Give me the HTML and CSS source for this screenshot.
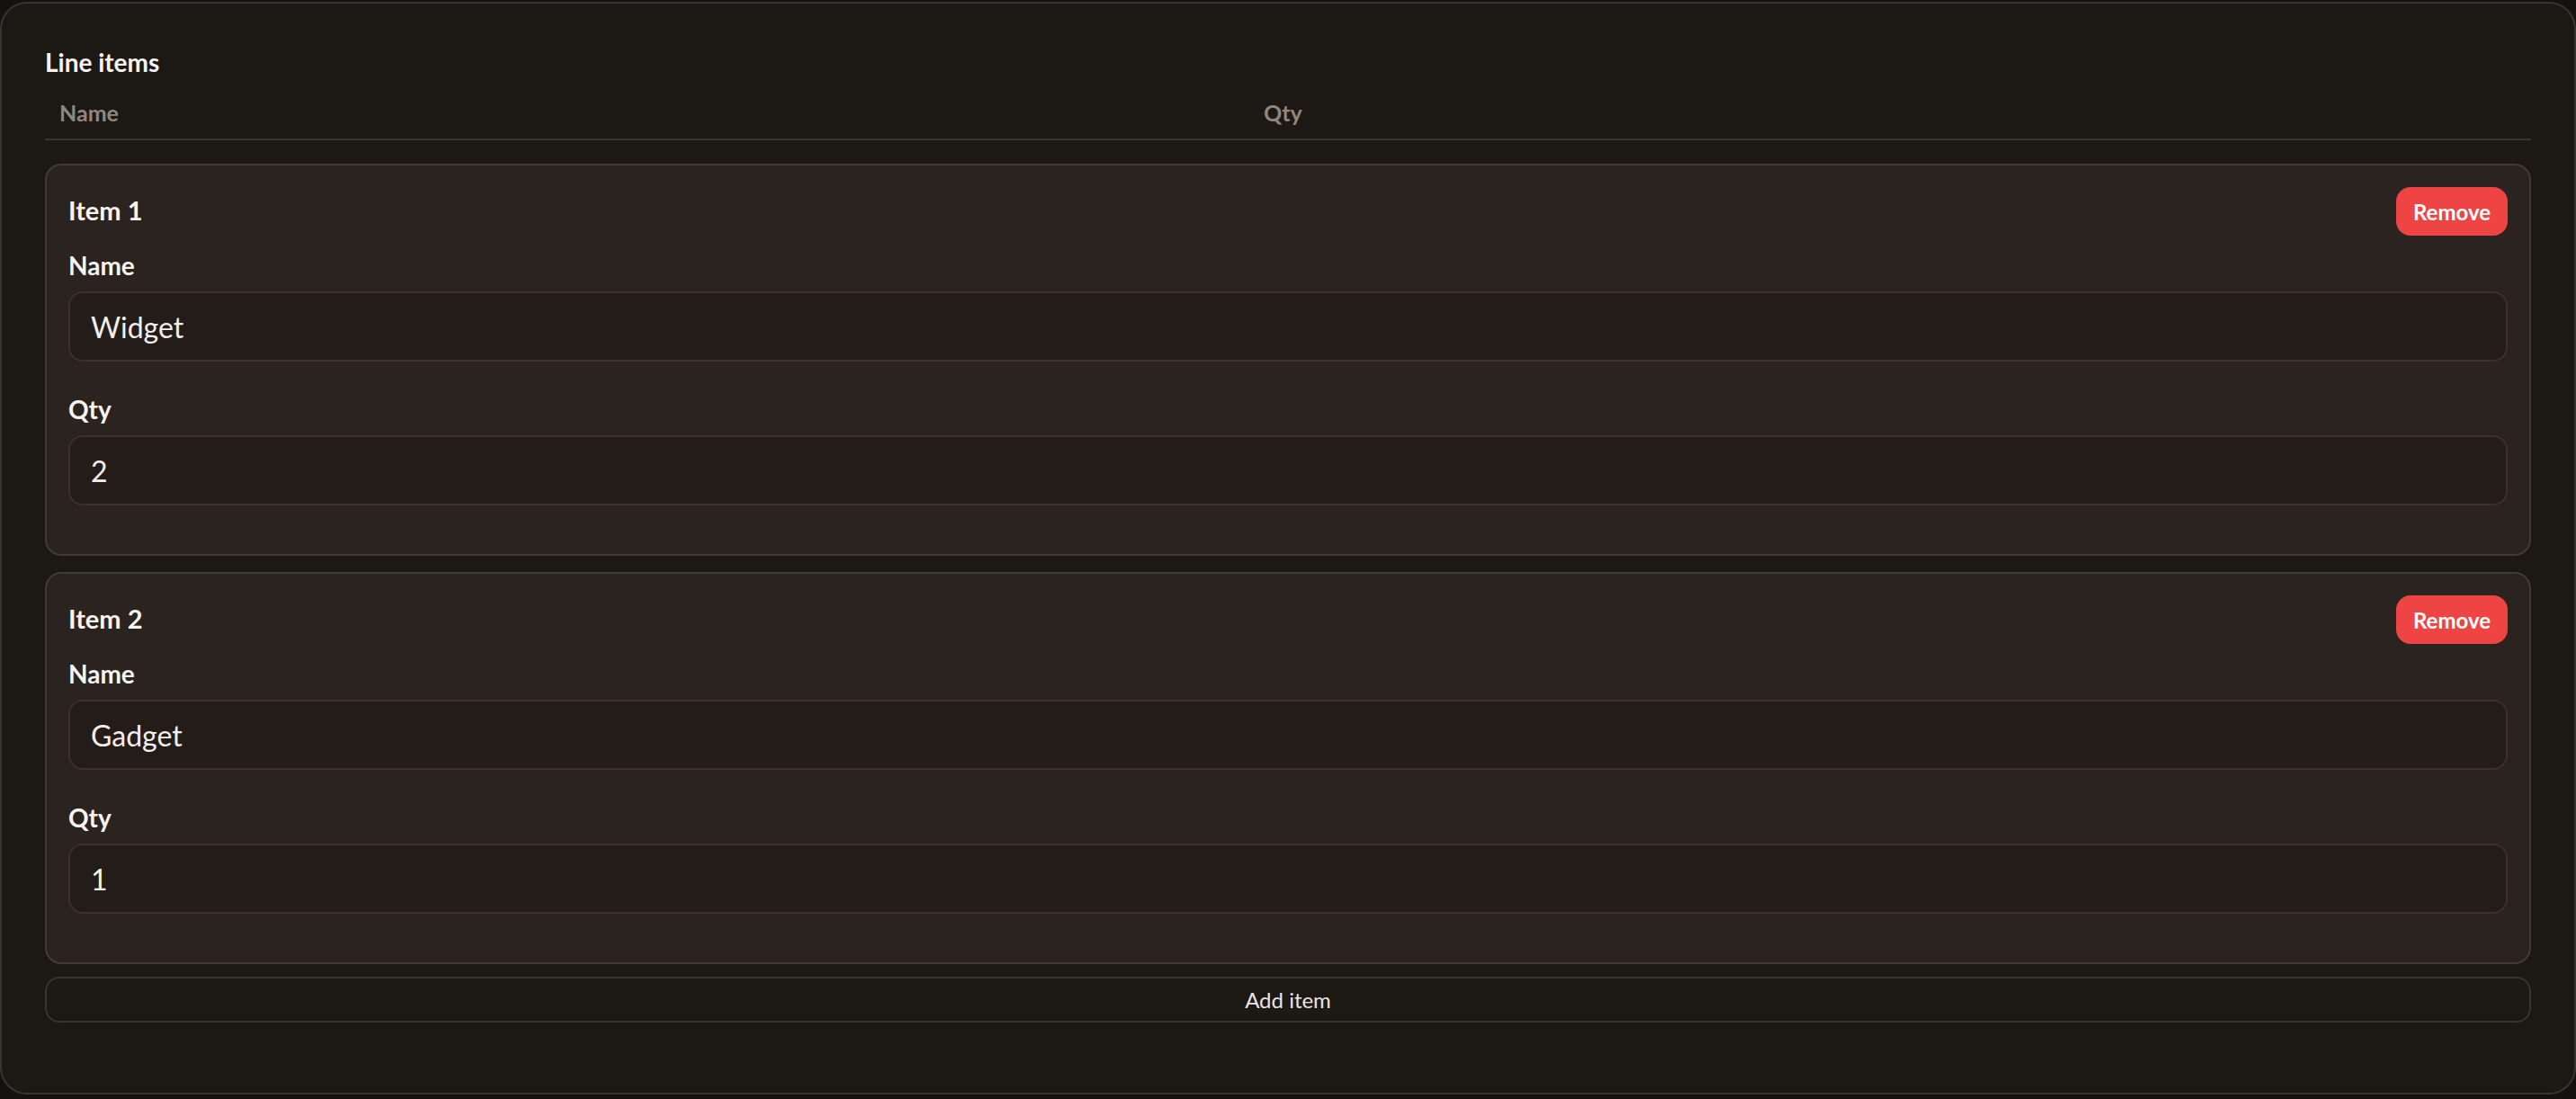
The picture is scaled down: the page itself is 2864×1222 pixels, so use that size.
FILE: index.html
```html
<!DOCTYPE html>
<html lang="en">
<head>
<meta charset="utf-8">
<title>Line items</title>
<link rel="stylesheet" href="styles.css">
</head>
<body>
<main class="panel">
  <h2 class="panel-title">Line items</h2>
  <div class="table-head">
    <div class="th">Name</div>
    <div class="th">Qty</div>
  </div>
  <div class="items">
    <section class="item-card">
      <div class="item-head">
        <h3 class="item-title">Item 1</h3>
        <button class="btn-remove" type="button">Remove</button>
      </div>
      <div class="fields">
        <label class="field">
          <span class="field-label">Name</span>
          <input class="field-input" type="text" value="Widget">
        </label>
        <label class="field">
          <span class="field-label">Qty</span>
          <input class="field-input" type="text" value="2">
        </label>
      </div>
    </section>
    <section class="item-card">
      <div class="item-head">
        <h3 class="item-title">Item 2</h3>
        <button class="btn-remove" type="button">Remove</button>
      </div>
      <div class="fields">
        <label class="field">
          <span class="field-label">Name</span>
          <input class="field-input" type="text" value="Gadget">
        </label>
        <label class="field">
          <span class="field-label">Qty</span>
          <input class="field-input" type="text" value="1">
        </label>
      </div>
    </section>
  </div>
  <button class="btn-add" type="button">Add item</button>
</main>
</body>
</html>
```
FILE: styles.css
```css
* {
  box-sizing: border-box;
}

html, body {
  margin: 0;
  padding: 0;
  background: #141110;
}

body {
  padding-top: 2px;
  font-family: "Lato", "Inter", "Liberation Sans", sans-serif;
  color: #f5f0ee;
}

.panel {
  display: flex;
  flex-direction: column;
  background: #1c1814;
  border: 2px solid #3a3431;
  border-radius: 30px;
  padding: 45px 48px 78px 48px;
}

.panel-title {
  margin: 0;
  font-size: 28px;
  line-height: 40px;
  font-weight: 700;
  color: #f7f3f1;
}

.table-head {
  display: grid;
  grid-template-columns: 1339px 1fr;
  margin-top: 20px;
  padding-bottom: 13px;
  border-bottom: 2px solid #3a3331;
}

.th {
  padding: 0 16px;
  font-size: 25px;
  line-height: 32px;
  font-weight: 700;
  color: #91867f;
}

.items {
  display: flex;
  flex-direction: column;
  gap: 18px;
  margin-top: 26px;
}

.item-card {
  display: flex;
  flex-direction: column;
  background: #2b2320;
  border: 2px solid #433a37;
  border-radius: 18px;
  padding: 24px 24px 54px 24px;
}

.item-head {
  display: flex;
  align-items: center;
  justify-content: space-between;
  height: 54px;
}

.item-title {
  margin: 0;
  padding-bottom: 3px;
  font-size: 29px;
  line-height: 40px;
  font-weight: 700;
  color: #f7f3f1;
}

.btn-remove {
  height: 54px;
  padding: 0 19px;
  border: 0;
  border-radius: 16px;
  background: #ef4444;
  color: #ffffff;
  font-family: inherit;
  font-size: 24px;
  font-weight: 700;
}

.fields {
  display: flex;
  flex-direction: column;
  gap: 33px;
  margin-top: 13px;
}

.field {
  display: flex;
  flex-direction: column;
  gap: 9px;
}

.field-label {
  font-size: 28px;
  line-height: 40px;
  font-weight: 700;
  color: #f7f3f1;
}

.field-input {
  display: block;
  width: 100%;
  height: 78px;
  padding: 0 23px;
  background: #241c19;
  border: 2px solid #3b3230;
  border-radius: 16px;
  color: #f3eeeb;
  font-family: inherit;
  font-size: 32px;
  font-weight: 400;
  outline: none;
}

.btn-add {
  margin-top: 14px;
  height: 51px;
  width: 100%;
  background: transparent;
  border: 2px solid #3b3331;
  border-radius: 16px;
  color: #ebe4e0;
  font-family: inherit;
  font-size: 24px;
  font-weight: 400;
}
```
